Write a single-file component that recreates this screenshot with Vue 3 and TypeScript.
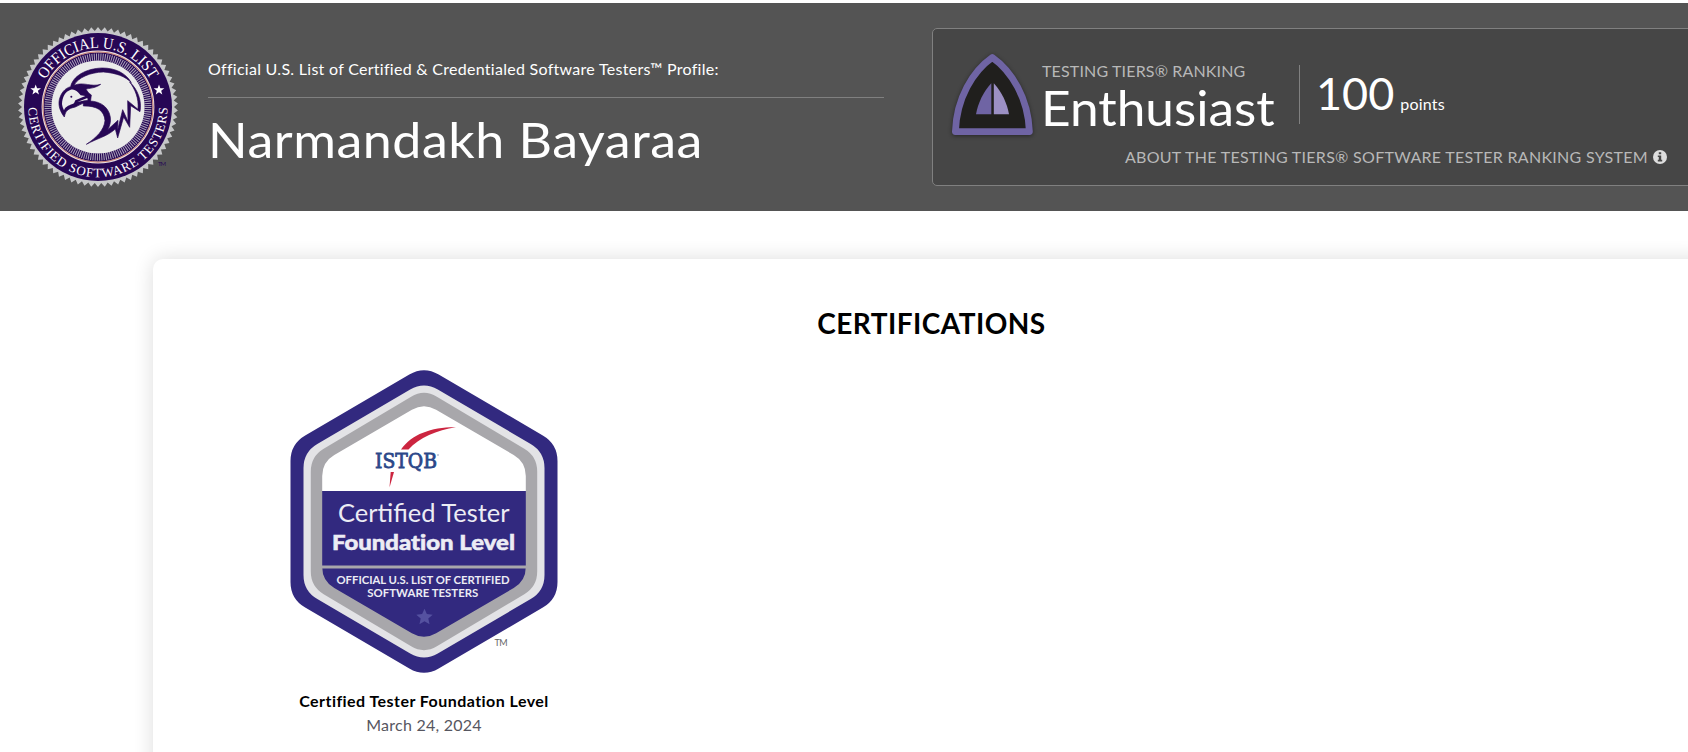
<script setup lang="ts">
type Point = [number, number]

function roundedPolygon(points: Point[], radius: number): string {
  const n = points.length
  const parts: string[] = []
  points.forEach((p, i) => {
    const prev = points[(i + n - 1) % n]
    const next = points[(i + 1) % n]
    const toward = (q: Point): string => {
      const d = Math.hypot(q[0] - p[0], q[1] - p[1])
      return `${(p[0] + ((q[0] - p[0]) * radius) / d).toFixed(2)} ${(p[1] + ((q[1] - p[1]) * radius) / d).toFixed(2)}`
    }
    parts.push(`${i ? 'L' : 'M'}${toward(prev)} Q${p[0]} ${p[1]} ${toward(next)}`)
  })
  return parts.join(' ') + 'Z'
}

function hexagon(halfWidth: number, halfHeight: number, shoulder: number, radius: number): string {
  const cx = 424
  const cy = 521.5
  return roundedPolygon(
    [
      [cx, cy - halfHeight],
      [cx + halfWidth, cy - shoulder],
      [cx + halfWidth, cy + shoulder],
      [cx, cy + halfHeight],
      [cx - halfWidth, cy + shoulder],
      [cx - halfWidth, cy - shoulder],
    ],
    radius,
  )
}

function spiked(cx: number, cy: number, outer: number, inner: number, count: number): string {
  const pts: string[] = []
  for (let i = 0; i < count * 2; i++) {
    const r = i % 2 ? inner : outer
    const a = (Math.PI * i) / count - Math.PI / 2
    pts.push(`${(cx + r * Math.cos(a)).toFixed(2)},${(cy + r * Math.sin(a)).toFixed(2)}`)
  }
  return pts.join(' ')
}

const outerHex = hexagon(133.5, 155.5, 77.5, 17)
const silverHex = hexagon(120.5, 140, 69.5, 16)
const greyHex = hexagon(113.2, 132.5, 65, 15)
const innerHex = hexagon(101.8, 118.8, 59.5, 14)

const sealEdge = spiked(98, 107, 80, 76, 74)
const leftStar = spiked(35.7, 90, 5.6, 2.3, 5)
const rightStar = spiked(159, 90, 5.6, 2.3, 5)
const badgeStar = spiked(424.5, 617.3, 8.6, 4, 5)
</script>

<template>
  <div class="page">
    <header class="banner">
      <svg class="seal" viewBox="18 27 160 160" width="160" height="160">
        <defs>
          <path id="arc-top" d="M39 107 A59 59 0 0 1 157 107" />
          <path id="arc-bottom" d="M28.6 104 A69.5 69.5 0 1 0 167.4 104" />
        </defs>
        <polygon :points="sealEdge" fill="#c6c7c9" />
        <circle cx="98" cy="107" r="74" fill="#270755" />
        <circle cx="98" cy="107" r="55.4" fill="none" stroke="#e9dfe6" stroke-width="2" />
        <circle cx="98" cy="107" r="55.2" fill="none" stroke="#c0705f" stroke-width=".9" />
        <circle cx="98" cy="107" r="50" fill="none" stroke="#aaa3b9" stroke-width="7" stroke-dasharray="1 1.18" />
        <circle cx="98" cy="107" r="46.6" fill="#ebebeb" />
        <text class="seal-text" font-size="16">
          <textPath href="#arc-top" startOffset="50%" text-anchor="middle" textLength="128" lengthAdjust="spacingAndGlyphs">OFFICIAL U.S. LIST</textPath>
        </text>
        <text class="seal-text" font-size="13">
          <textPath href="#arc-bottom" startOffset="50%" text-anchor="middle" textLength="218">CERTIFIED SOFTWARE TESTERS</textPath>
        </text>
        <polygon :points="leftStar" fill="#fff" />
        <polygon :points="rightStar" fill="#fff" />
        <g transform="translate(50 60) scale(.33333)" fill="#270755">
          <path stroke="#270755" stroke-width="2" d="M62 80C68 49 108 25 157 24C197 24 228 40 244 68C226 49 198 39 160 36C120 37 84 53 72 76C102 64 122 82 152 73C134 86 116 84 108 88L116 99L124 105L121 128C105 124 92 134 76 141C54 146 47 151 43 171C31 155 24 137 28 119C33 99 45 84 62 80Z" />
          <path d="M62 89C45 95 37 111 36 132C37 141 40 146 42 151C47 138 60 136 72 130L76 121L106 108L92 106L84 97C76 89 69 87 62 89Z" fill="#ebebeb" />
          <path d="M82 126L112 114L113 121C102 120 92 125 82 126Z" fill="#ebebeb" />
          <circle cx="64" cy="110" r="3" />
          <path stroke="#270755" stroke-width="2" d="M100 124C142 118 176 136 181 172C183 186 179 199 173 209L204 181L203 210L218 149L234 184L233 122L264 148C267 115 255 87 239 66C264 89 276 123 270 155L242 137L239 202L221 171L203 234L196 207C170 230 142 235 109 253C139 233 162 211 165 182C163 151 140 137 100 138Z" />
        </g>
        <text x="158" y="166" class="seal-tm" textLength="8">TM</text>
      </svg>

      <div class="profile">
        <p class="profile-label">Official U.S. List of Certified &amp; Credentialed Software Testers™ Profile:</p>
        <h1 class="profile-name">Narmandakh Bayaraa</h1>
      </div>

      <section class="tier">
        <div class="tier-row">
          <svg class="tier-icon" viewBox="948 50 90 90" width="90" height="90">
            <path d="M992.3 57.5C973 71 956.5 98 955.4 131.6H1029.4C1028.2 98 1011.5 71 992.3 57.5Z" fill="#201f1d" stroke="#6f64a4" stroke-width="6.8" stroke-linejoin="round" />
            <path d="M991.3 83.3V114.3H976C978 103 983.5 91.5 991.3 83.3Z" fill="#6f64a4" />
            <path d="M993.8 83.3V114.3H1009C1007 103 1001.5 91.5 993.8 83.3Z" fill="#9c90c4" />
          </svg>
          <div class="tier-rank">
            <span class="tier-label">TESTING TIERS® RANKING</span>
            <span class="tier-name">Enthusiast</span>
          </div>
          <div class="tier-points">
            <span class="points-value">100</span>
            <span class="points-unit">points</span>
          </div>
        </div>
        <div class="tier-about">
          <span class="about-text">ABOUT THE TESTING TIERS® SOFTWARE TESTER RANKING SYSTEM</span>
          <svg class="info" viewBox="0 0 14 14" width="14" height="14">
            <circle cx="7" cy="7" r="7" fill="#dedede" />
            <path d="M5.8 2.2H8.2V4.3H5.8ZM4.8 5.4H8.2V9.8H9.2V11.4H4.8V9.8H5.8V7H4.8Z" fill="#464646" />
          </svg>
        </div>
      </section>
    </header>

    <main class="card">
      <h2 class="card-title">CERTIFICATIONS</h2>
      <article class="cert">
        <svg class="badge" viewBox="289 369 270 306" width="270" height="306">
          <defs>
            <clipPath id="shield"><path :d="innerHex" /></clipPath>
          </defs>
          <path :d="outerHex" fill="#32297f" />
          <path :d="silverHex" fill="#e3e3e6" />
          <path :d="greyHex" fill="#a8a7ab" />
          <g clip-path="url(#shield)">
            <rect x="320" y="400" width="208" height="91" fill="#fff" />
            <rect x="320" y="491" width="208" height="74.5" fill="#32297f" />
            <rect x="320" y="568.5" width="208" height="75" fill="#32297f" />
          </g>
          <path d="M401 449.5C412 434 432 427 456 427.3C437 430 419 438 408.5 449.5Z" fill="#cc2540" />
          <path d="M390.7 472H394L389.5 487.5Z" fill="#cc2540" />
          <text x="375" y="467.8" class="istqb" textLength="62" lengthAdjust="spacingAndGlyphs">ISTQB</text>
          <circle cx="438" cy="455" r=".8" fill="#8795b5" />
          <text x="338" y="521.7" class="badge-light" textLength="171.5" lengthAdjust="spacingAndGlyphs">Certified Tester</text>
          <text x="332" y="549.5" class="badge-heavy" textLength="183" lengthAdjust="spacingAndGlyphs">Foundation Level</text>
          <text x="336.5" y="584.2" class="badge-small" textLength="173" lengthAdjust="spacingAndGlyphs">OFFICIAL U.S. LIST OF CERTIFIED</text>
          <text x="367.3" y="596.7" class="badge-small" textLength="111" lengthAdjust="spacingAndGlyphs">SOFTWARE TESTERS</text>
          <polygon :points="badgeStar" fill="#5551a0" />
          <text x="494.5" y="645.6" class="badge-tm" textLength="13">TM</text>
        </svg>
        <p class="cert-name">Certified Tester Foundation Level</p>
        <p class="cert-date">March 24, 2024</p>
      </article>
    </main>
  </div>
</template>

<style>
html,
body {
  margin: 0;
  overflow: hidden;
}
</style>

<style scoped>
.page {
  box-sizing: border-box;
  width: 1688px;
  height: 752px;
  padding-top: 3px;
  overflow: hidden;
  background: #fff;
  font-family: Lato, "Open Sans", sans-serif;
  color: #fff;
}
p,
h1,
h2 {
  margin: 0;
  white-space: nowrap;
}
.banner {
  display: flex;
  box-sizing: border-box;
  height: 208px;
  padding: 24px 0 0 18px;
  background: #545454;
}
.seal {
  flex: none;
}
.seal-text {
  font-family: "Liberation Serif", serif;
  fill: #fff;
}
.seal-tm {
  font-size: 6px;
  fill: #270755;
}
.profile {
  flex: none;
  width: 676px;
  margin-left: 30px;
  padding-top: 30px;
}
.profile-label {
  height: 40px;
  border-bottom: 1px solid #808080;
  font-size: 16px;
  line-height: 24px;
  letter-spacing: 0.28px;
}
.profile-name {
  margin-top: 13px;
  font-size: 48px;
  font-weight: 400;
  line-height: 58px;
  letter-spacing: 0.5px;
  transform: scaleX(1.082);
  transform-origin: 0 0;
}
.tier {
  flex: none;
  box-sizing: border-box;
  width: 780px;
  height: 158px;
  margin: 1px 0 0 48px;
  border: 1px solid #808080;
  border-radius: 5px;
  background: #464646;
}
.tier-row {
  display: flex;
  height: 115px;
  padding-left: 15px;
}
.tier-icon {
  flex: none;
  margin-top: 21px;
  filter: drop-shadow(0 1px 2px rgba(0, 0, 0, 0.45));
}
.tier-rank {
  display: flex;
  flex-direction: column;
  flex: none;
  width: 261px;
  padding: 30px 0 0 4px;
  box-sizing: border-box;
}
.tier-label {
  font-size: 16px;
  line-height: 24px;
  letter-spacing: 0.15px;
  color: #b8b8b8;
  white-space: nowrap;
}
.tier-name {
  margin-left: -1px;
  font-size: 48px;
  line-height: 50px;
  transform: scaleX(1.07);
  transform-origin: 0 0;
}
.tier-points {
  display: flex;
  align-items: baseline;
  height: 59px;
  margin-top: 36px;
  padding-left: 16px;
  border-left: 1px solid #808080;
}
.points-value {
  font-size: 45px;
  line-height: 56px;
}
.points-unit {
  margin-left: 6px;
  font-size: 16px;
  letter-spacing: 0.2px;
}
.tier-about {
  display: flex;
  align-items: center;
  justify-content: flex-end;
  height: 24px;
  margin-right: 44px;
  font-size: 16px;
  color: #b8b8b8;
  white-space: nowrap;
}
.about-text {
  letter-spacing: 0.29px;
}
.info {
  margin: 2px 0 0 5px;
}
.card {
  box-sizing: border-box;
  width: 1557px;
  height: 560px;
  margin: 48px 0 0 153px;
  padding-top: 44px;
  border-radius: 10px;
  box-shadow: 0 0 20px rgba(0, 0, 0, 0.14);
  color: #000;
}
.card-title {
  font-size: 28px;
  font-weight: 700;
  line-height: 40px;
  letter-spacing: 0.45px;
  text-align: center;
}
.cert {
  width: 270px;
  margin: 26px 0 0 136px;
  text-align: center;
}
.badge {
  display: block;
}
.istqb {
  font-family: "DejaVu Serif", serif;
  font-size: 20px;
  font-weight: 400;
  fill: #2b4789;
  stroke: #2b4789;
  stroke-width: 0.8px;
}
.badge-light {
  font-size: 24.5px;
  fill: #ececf4;
}
.badge-heavy {
  font-size: 21px;
  font-weight: 900;
  font-variant-ligatures: none;
  fill: #ececf4;
  stroke: #ececf4;
  stroke-width: 0.5px;
}
.badge-small {
  font-size: 10.5px;
  font-weight: 700;
  fill: #ececf4;
}
.badge-tm {
  font-size: 9px;
  fill: #666;
}
.cert-name {
  margin-top: 14px;
  font-size: 16px;
  font-weight: 700;
  line-height: 24px;
  letter-spacing: 0.45px;
}
.cert-date {
  font-size: 16px;
  line-height: 24px;
  letter-spacing: 0.25px;
  color: #565660;
}
</style>
